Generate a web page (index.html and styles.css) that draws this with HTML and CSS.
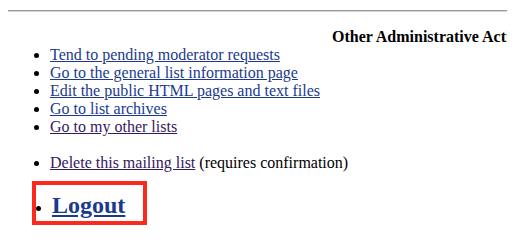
FILE: index.html
```html
<!DOCTYPE html>
<html lang="en">
<head>
  <meta charset="UTF-8" />
  <title>List Administration</title>
  <link rel="stylesheet" href="styles.css">
</head>
<body>
  <hr class="rule" />

  <div class="section-title">
    <b>Other Administrative Activities</b>
  </div>

  <ul class="links">
    <li><a href="#">Tend to pending moderator requests</a></li>
    <li><a href="#">Go to the general list information page</a></li>
    <li><a href="#">Edit the public HTML pages and text files</a></li>
    <li><a href="#">Go to list archives</a></li>
    <li><a class="visited" href="#">Go to my other lists</a></li>
  </ul>

  <ul class="links danger">
    <li>
      <a class="visited" href="#">Delete this mailing list</a>
      (requires confirmation)
    </li>
  </ul>

  <div class="highlight">
    <ul class="logout">
      <li><a href="#">Logout</a></li>
    </ul>
  </div>
</body>
</html>
```

FILE: styles.css
```css
html {
  overflow: hidden;
}

body {
  margin: 0 8px;
  font-family: "Liberation Serif", "Times New Roman", serif;
  font-size: 16px;
  line-height: 18px;
  color: #000;
  background: #fff;
}

a {
  color: #1a3a8f;
}

a.visited {
  color: #35185f;
}

.rule {
  margin: 10px 0 0;
  border: 0;
  border-top: 1px solid #9a9a9a;
  border-bottom: 1px solid #d6d6d6;
}

.section-title {
  width: 862px;
  margin-top: 16px;
  text-align: center;
}

.links {
  margin: 0 0 18px;
  padding-left: 42px;
}

.links.danger {
  margin-bottom: 9px;
}

.highlight {
  display: inline-block;
  margin-left: 24px;
  border: 4px solid #fb2a1c;
}

.logout {
  margin: 0;
  padding: 6px 18px 2px 16px;
  font-size: 24px;
  line-height: 28px;
  font-weight: bold;
}

.logout li::marker {
  font-size: 16px;
}
```
